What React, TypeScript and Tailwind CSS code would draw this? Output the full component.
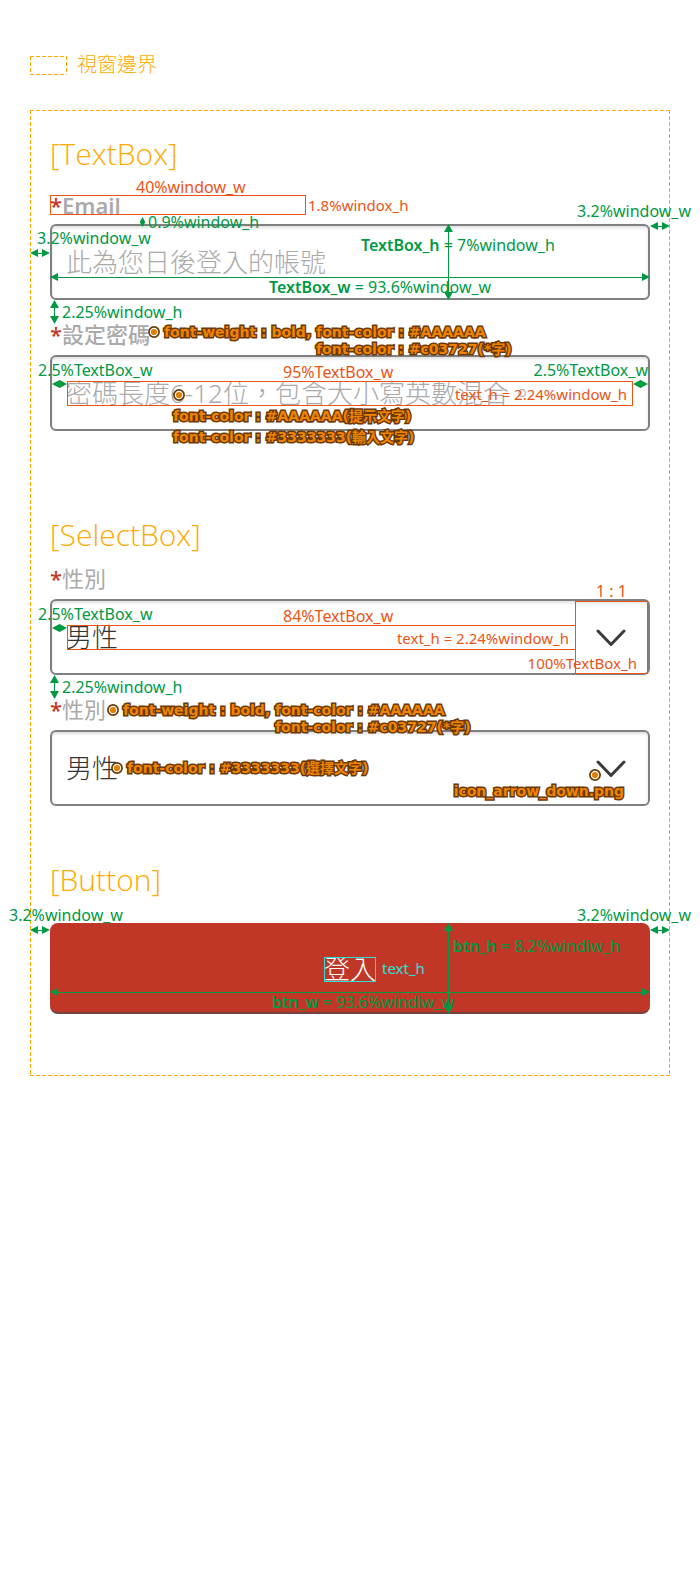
import type { ReactNode } from "react";

const GREEN = "#009944";

const overlay = "pointer-events-none absolute whitespace-nowrap";

const dashed =
  "[background-image:repeating-linear-gradient(90deg,#ffaa00_0_4px,transparent_4px_6px),repeating-linear-gradient(90deg,#ffaa00_0_4px,transparent_4px_6px),repeating-linear-gradient(180deg,#ffaa00_0_4px,transparent_4px_6px),repeating-linear-gradient(180deg,#ffaa00_0_4px,transparent_4px_6px)] [background-size:100%_1px,100%_1px,1px_100%,1px_100%] [background-position:top_left,bottom_left,top_left,top_right] bg-no-repeat";

function Dot() {
  return (
    <svg viewBox="0 0 12 12" className="size-3 shrink-0" aria-hidden="true">
      <circle cx="6" cy="6" r="5.1" fill="#fff" stroke="#6a3906" strokeWidth="1.7" />
      <circle cx="6" cy="6" r="3.1" fill="#e57f00" />
    </svg>
  );
}

function Callout({ children }: { children: ReactNode }) {
  return (
    <span className="text-[14px] leading-5 font-bold text-[#f08300] font-['DejaVu_Sans','Noto_Sans_CJK_TC',sans-serif] [-webkit-text-stroke:3px_#6a3906] [paint-order:stroke_fill] [stroke-linejoin:round]">
      {children}
    </span>
  );
}

function HArrow({ className = "w-5" }: { className?: string }) {
  return (
    <span className={`flex h-2 items-center ${className}`}>
      <svg viewBox="0 0 8 8" className="size-2 shrink-0" aria-hidden="true">
        <path d="M0 4 8 0v8z" fill={GREEN} />
      </svg>
      <span className="h-px min-w-0 flex-1 bg-[#009944]" />
      <svg viewBox="0 0 8 8" className="size-2 shrink-0" aria-hidden="true">
        <path d="M8 4 0 0v8z" fill={GREEN} />
      </svg>
    </span>
  );
}

function VArrow({ className = "h-6" }: { className?: string }) {
  return (
    <span className={`flex w-[9px] flex-col items-center ${className}`}>
      <svg viewBox="0 0 9 8" className="h-2 w-[9px] shrink-0" aria-hidden="true">
        <path d="M4.500 0 0 8h9z" fill={GREEN} />
      </svg>
      <span className="min-h-0 w-px flex-1 bg-[#009944]" />
      <svg viewBox="0 0 9 8" className="h-2 w-[9px] shrink-0" aria-hidden="true">
        <path d="M4.500 8 0 0h9z" fill={GREEN} />
      </svg>
    </span>
  );
}

function InsetMark() {
  return (
    <svg viewBox="0 0 15 8" className="h-2 w-[15px] shrink-0" aria-hidden="true">
      <path d="M0 4 7.5 0 15 4 7.5 8z" fill={GREEN} />
    </svg>
  );
}

function VerticalGap() {
  return (
    <span className={`${overlay} -top-6 left-0 flex items-center gap-[3px] leading-5 text-[#009944]`}>
      <VArrow />
      2.25%window_h
    </span>
  );
}

function RightMargin({ className }: { className: string }) {
  return (
    <span className={`${overlay} -right-[41px] flex flex-col items-end gap-px leading-5 text-[#009944] ${className}`}>
      3.2%window_w
      <span className="pr-[21px]">
        <HArrow />
      </span>
    </span>
  );
}

function LeftInset() {
  return (
    <span className={`${overlay} top-[5px] -left-3 flex flex-col leading-5 text-[#009944]`}>
      2.5%TextBox_w
      <span className="pl-[14px]">
        <InsetMark />
      </span>
    </span>
  );
}

function Heading({ children }: { children: ReactNode }) {
  return (
    <h2 className="font-['Open_Sans','Noto_Sans',sans-serif] text-[30px] leading-10 font-light text-[#ffaa00]">
      {children}
    </h2>
  );
}

function FieldLabel({ htmlFor, children }: { htmlFor: string; children: ReactNode }) {
  return (
    <label htmlFor={htmlFor} className="flex h-5 items-center text-[22px] leading-5 text-[#aaaaaa]">
      <span className="font-medium text-[#c03727]">*</span>
      {children}
    </label>
  );
}

const box =
  "block h-[76px] w-full rounded-md border-2 border-[#808080] bg-white px-[14px] text-[26px] font-light shadow-[inset_0_2px_3px_rgba(0,0,0,0.12)]";

function Chevron() {
  return (
    <svg viewBox="0 0 30 18" className="h-[18px] w-[30px]" aria-hidden="true">
      <path d="M2 2 15 15.500 28 2" fill="none" stroke="#3e3a39" strokeWidth="3" strokeLinecap="round" strokeLinejoin="round" />
    </svg>
  );
}

function SelectBox({ id }: { id: string }) {
  return (
    <>
      <select id={id} className={`${box} appearance-none text-[#333333]`}>
        <option>男性</option>
      </select>
      <span className="pointer-events-none absolute inset-y-0 right-6 flex items-center pt-[2px]">
        <Chevron />
      </span>
    </>
  );
}

export default function App() {
  return (
    <main className="min-h-screen overflow-x-hidden bg-white px-[30px] pt-[55px] pb-[500px] font-['Noto_Sans','Noto_Sans_CJK_TC',sans-serif] text-[16px]">
      <div className="flex h-5 items-end gap-[10px] text-[20px] leading-5 font-light text-[#ffaa00]">
        <span className={`h-[19px] w-[37px] ${dashed}`} />
        視窗邊界
      </div>

      <div className={`mt-[35px] px-5 pt-6 pb-[62px] ${dashed}`}>
        <section>
          <Heading>[TextBox]</Heading>

          <div className="relative mt-[21px]">
            <FieldLabel htmlFor="email">
              <b className="font-semibold">Email</b>
            </FieldLabel>
            <span className={`${overlay} top-0 left-0 flex items-center gap-[2px] text-[15px] leading-5 text-[#ea5514]`}>
              <span className="h-5 w-64 border border-[#ea5514]" />
              1.8%windox_h
            </span>
            <span className={`${overlay} -top-[18px] left-[86px] leading-5 text-[#ea5514]`}>40%window_w</span>
            <span className={`${overlay} top-[17px] left-[90px] z-10 flex items-center gap-[3px] leading-5 text-[#009944]`}>
              <svg viewBox="0 0 5 10" className="h-[10px] w-[5px]" aria-hidden="true">
                <path d="M2.500 0 5 4.500v1L2.500 10 0 5.500v-1z" fill={GREEN} />
              </svg>
              0.9%window_h
            </span>
            <div className="relative mt-[9px]">
              <input
                id="email"
                type="text"
                placeholder="此為您日後登入的帳號"
                className={`${box} text-[#333333] placeholder:text-[#aaaaaa]`}
              />
              <span className={`${overlay} top-1 -left-5 flex flex-col gap-px leading-5 text-[#009944]`}>
                <span className="pl-[7px]">3.2%window_w</span>
                <HArrow />
              </span>
              <RightMargin className="-top-[23px]" />
              <span className={`${overlay} inset-x-0 bottom-[7px] flex flex-col leading-3 text-[#009944]`}>
                <HArrow className="w-full" />
                <span className="pl-[219px]">
                  <b className="font-semibold">TextBox_w</b> = 93.6%window_w
                </span>
              </span>
              <span className={`${overlay} inset-y-0 left-[311px] flex leading-5 text-[#009944]`}>
                <span className="pt-[11px]">
                  <b className="font-semibold">TextBox_h</b> = 7%window_h
                </span>
              </span>
              <span className={`${overlay} inset-y-0 left-[394px] flex`}>
                <VArrow className="h-full" />
              </span>
            </div>
          </div>

          <div className="relative mt-6">
            <VerticalGap />
            <FieldLabel htmlFor="password">
              <span className="font-medium">設定密碼</span>
            </FieldLabel>
            <span className={`${overlay} -top-[2px] left-[98px] z-10 flex items-center gap-1`}>
              <Dot />
              <Callout>font-weight : bold, font-color : #AAAAAA</Callout>
            </span>
            <span className={`${overlay} top-[15px] left-[266px] z-10 flex`}>
              <Callout>font-color : #c03727(*字)</Callout>
            </span>
            <div className="relative mt-[11px]">
              <input
                id="password"
                type="text"
                placeholder="密碼長度6-12位，包含大小寫英數混合。"
                className={`${box} text-[#333333] placeholder:text-[#aaaaaa]`}
              />
              <LeftInset />
              <span className={`${overlay} top-[5px] right-[2px] flex flex-col items-end leading-5 text-[#009944]`}>
                2.5%TextBox_w
                <InsetMark />
              </span>
              <span
                className={`${overlay} inset-x-[17px] top-[26px] flex h-[25px] items-center justify-end border border-[#ea5514] pr-[5px] text-[15px] leading-5 text-[#ea5514]`}
              >
                text_h = 2.24%window_h
              </span>
              <span className={`${overlay} top-[7px] left-[233px] leading-5 text-[#ea5514]`}>95%TextBox_w</span>
              <span className={`${overlay} top-[34px] left-[123px] z-10 flex flex-col gap-px`}>
                <Dot />
                <span className="mt-1 flex">
                  <Callout>font-color : #AAAAAA(提示文字)</Callout>
                </span>
                <Callout>font-color : #3333333(輸入文字)</Callout>
              </span>
            </div>
          </div>
        </section>

        <section className="mt-[84px]">
          <Heading>[SelectBox]</Heading>

          <div className="relative mt-[13px]">
            <FieldLabel htmlFor="gender">性別</FieldLabel>
            <div className="relative mt-[11px]">
              <SelectBox id="gender" />
              <LeftInset />
              <span
                className={`${overlay} top-[26px] right-[74px] left-[17px] flex h-[25px] items-center justify-end border border-[#ea5514] pr-[6px] text-[15px] leading-5 text-[#ea5514]`}
              >
                text_h = 2.24%window_h
              </span>
              <span className={`${overlay} top-[7px] left-[233px] leading-5 text-[#ea5514]`}>84%TextBox_w</span>
              <span className={`${overlay} right-[2px] bottom-px flex flex-col items-center leading-5 text-[#ea5514]`}>
                1 : 1
                <span className="flex size-[73px] items-end justify-end border border-[#ea5514] pr-[10px] text-[15px]">
                  100%TextBox_h
                </span>
              </span>
            </div>
          </div>

          <div className="relative mt-6">
            <VerticalGap />
            <FieldLabel htmlFor="gender-example">性別</FieldLabel>
            <span className={`${overlay} top-px left-[57px] z-10 flex items-center gap-1`}>
              <Dot />
              <Callout>font-weight : bold, font-color : #AAAAAA</Callout>
            </span>
            <span className={`${overlay} top-[18px] left-[225px] z-10 flex`}>
              <Callout>font-color : #c03727(*字)</Callout>
            </span>
            <div className="relative mt-[11px]">
              <SelectBox id="gender-example" />
              <span className={`${overlay} inset-y-0 left-[61px] flex items-center gap-1`}>
                <Dot />
                <Callout>font-color : #3333333(選擇文字)</Callout>
              </span>
              <span className={`${overlay} right-[26px] bottom-[5px] flex flex-col items-end`}>
                <span className="pr-[23px]">
                  <Dot />
                </span>
                <Callout>icon_arrow_down.png</Callout>
              </span>
            </div>
          </div>
        </section>

        <section className="mt-[54px]">
          <Heading>[Button]</Heading>
          <div className="relative mt-[23px]">
            <button
              type="button"
              className="flex h-[91px] w-full items-center justify-center rounded-lg border-b-2 border-[#724440] bg-[#c03727] pt-[3px] text-[26px] leading-none font-light text-white"
            >
              <span className="flex h-[25px] items-center outline-1 -outline-offset-1 outline-[#2be0dc]">登入</span>
            </button>
            <span className={`${overlay} inset-y-0 left-[332px] flex items-center text-[15px] text-[#2be0dc]`}>text_h</span>
            <span className={`${overlay} -top-[18px] -left-[41px] flex flex-col gap-px leading-5 text-[#009944]`}>
              3.2%window_w
              <span className="pl-[21px]">
                <HArrow />
              </span>
            </span>
            <RightMargin className="-top-[18px]" />
            <span className={`${overlay} inset-x-0 bottom-[6px] flex flex-col leading-3 text-[#009944]`}>
              <HArrow className="w-full" />
              <span className="pl-[222px]">
                <b className="font-semibold">btn_w</b> = 93.6%windiw_w
              </span>
            </span>
            <span className={`${overlay} inset-y-0 left-[394px] flex leading-5 text-[#009944]`}>
              <VArrow className="h-full" />
              <span className="pt-[13px]">
                <b className="font-semibold">btn_h</b> = 8.2%windiw_h
              </span>
            </span>
          </div>
        </section>
      </div>
    </main>
  );
}
